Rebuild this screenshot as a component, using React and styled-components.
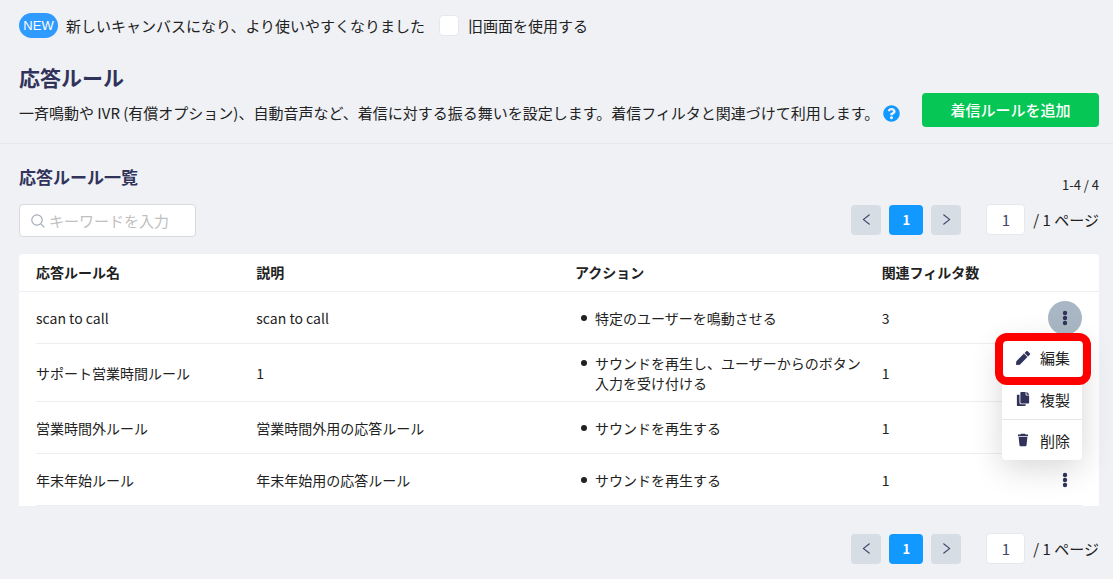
import { useState } from "react";
import styled, { createGlobalStyle } from "styled-components";
import { FaCopy, FaPen, FaQuestionCircle } from "react-icons/fa";
import { AiOutlineLeft, AiOutlineRight } from "react-icons/ai";

const GlobalStyle = createGlobalStyle`
  * {
    box-sizing: border-box;
  }
  body {
    margin: 0;
    background-color: #eff1f5;
    color: #222222;
    font-family: "Noto Sans CJK JP", sans-serif;
    font-size: 14px;
    line-height: 20px;
  }
  button, input {
    font-family: inherit;
  }
`;
const Notice = styled.div`
  display: flex;
  align-items: center;
  padding: 13px 14px 0 19px;
  font-size: 15px;
  line-height: 24px;
`;
const NewBadge = styled.span`
  width: 39px;
  height: 25px;
  margin-right: 8px;
  border-radius: 13px;
  background-color: #2f9bff;
  color: white;
  font-family: "Liberation Sans", sans-serif;
  font-size: 13px;
  line-height: 25px;
  text-align: center;
`;
const OldViewLabel = styled.label`
  display: flex;
  align-items: center;
  gap: 9px;
  margin-left: 14px;
`;
const CheckBox = styled.input`
  appearance: none;
  width: 20px;
  height: 21px;
  margin: 0;
  border: 1px solid #e6e8ee;
  border-radius: 4px;
  background-color: white;
  &:checked {
    background-color: #1199ff;
  }
`;
const PageHeader = styled.header`
  display: flex;
  justify-content: space-between;
  align-items: flex-end;
  padding: 23px 14px 16px 19px;
  border-bottom: 1px solid #e3e6eb;
`;
const PageTitle = styled.h1`
  margin: 0 0 6px;
  color: #31335a;
  font-size: 21px;
  font-weight: 700;
  line-height: 32px;
`;
const Description = styled.p`
  display: flex;
  align-items: center;
  gap: 4px;
  margin: 0;
  font-size: 15px;
  line-height: 28px;
`;
const HelpButton = styled.button`
  display: flex;
  padding: 0;
  border: none;
  background: none;
  color: #1199ff;
  font-size: 17px;
`;
const AddButton = styled.button`
  flex: none;
  width: 177px;
  height: 34px;
  padding: 0 0 2px;
  border: none;
  border-radius: 4px;
  background-color: #06c755;
  color: white;
  font-size: 15px;
  font-weight: 500;
`;
const Section = styled.main`
  padding: 19px 14px 15px 19px;
`;
const Toolbar = styled.div`
  display: flex;
  justify-content: space-between;
  align-items: flex-start;
  margin-bottom: 17px;
`;
const SectionTitle = styled.h2`
  margin: 0 0 13px;
  color: #31335a;
  font-size: 17px;
  font-weight: 700;
  line-height: 28px;
`;
const SearchBox = styled.label`
  display: flex;
  align-items: center;
  gap: 4px;
  width: 177px;
  height: 33px;
  padding: 0 11px;
  border: 1px solid #d9dadd;
  border-radius: 4px;
  background-color: white;
  color: #a3acba;
  svg {
    flex: none;
  }
`;
const SearchInput = styled.input`
  min-width: 0;
  flex: 1;
  padding: 0;
  border: none;
  outline: none;
  background: none;
  font-size: 15px;
  &::placeholder {
    color: #bfbfbf;
  }
`;
const ToolbarRight = styled.div`
  display: flex;
  flex-direction: column;
  gap: 9px;
  padding-top: 12px;
`;
const Count = styled.div`
  font-size: 13px;
  text-align: right;
`;
const PagerNav = styled.nav`
  display: flex;
  justify-content: flex-end;
  align-items: center;
  gap: 8px;
  height: 31px;
  font-size: 15px;
`;
const PageButton = styled.button`
  display: flex;
  justify-content: center;
  align-items: center;
  width: ${(props) => (props.$active ? "34px" : "30px")};
  height: 30px;
  padding: 0;
  border: none;
  border-radius: 4px;
  background-color: ${(props) => (props.$active ? "#1199ff" : "#d6dde5")};
  color: ${(props) => (props.$active ? "white" : "#43466a")};
  font-size: 13px;
  font-weight: 700;
`;
const PageInput = styled.input`
  width: 39px;
  height: 31px;
  margin-left: 17px;
  padding: 0;
  border: 1px solid #e6e8ee;
  border-radius: 4px;
  background-color: white;
  color: #43466a;
  font-size: 15px;
  text-align: center;
`;
const BottomPager = styled.div`
  margin-top: 27px;
`;
const RuleTable = styled.table`
  width: 100%;
  border-spacing: 0;
  border-radius: 4px 4px 0 0;
  background-color: white;
  table-layout: fixed;
`;
const HeadCell = styled.th`
  width: ${(props) => props.$width};
  padding: 8px 0 9px 17px;
  border-bottom: 1px solid #eceef1;
  font-weight: 700;
  text-align: left;
`;
const Row = styled.tr`
  background: linear-gradient(#eceef1, #eceef1) center bottom / calc(100% - 34px) 1px no-repeat;
`;
const Cell = styled.td`
  padding: 9px 17px;
`;
const ActionCell = styled(Cell)`
  padding-right: 0;
`;
const ActionList = styled.ul`
  margin: 0;
  padding-left: 6px;
  list-style: none;
`;
const ActionItem = styled.li`
  display: flex;
  gap: 8px;
  &::before {
    content: "";
    flex: none;
    width: 6px;
    height: 6px;
    margin-top: 7px;
    border-radius: 50%;
    background-color: #222222;
  }
`;
const MenuArea = styled.div`
  position: relative;
  display: flex;
  justify-content: flex-end;
`;
const KebabButton = styled.button`
  display: flex;
  justify-content: center;
  align-items: center;
  width: 34px;
  height: 34px;
  padding: 0;
  border: none;
  border-radius: 50%;
  background-color: ${(props) => (props.$open ? "#a9b7c4" : "transparent")};
  color: #31335a;
`;
const Menu = styled.div`
  position: absolute;
  top: 36px;
  right: 0;
  z-index: 10;
  width: 80px;
  border-radius: 4px;
  background-color: white;
  box-shadow: 0 8px 32px rgba(0, 0, 0, 0.16);
`;
const MenuItem = styled.button`
  display: flex;
  align-items: center;
  gap: 10px;
  width: 100%;
  height: 41px;
  padding: 0 12px 0 14px;
  border: none;
  border-top: ${(props) => (props.$first ? "none" : "1px solid #e3e5e9")};
  background: none;
  color: #222222;
  font-size: 15px;
  white-space: nowrap;
  svg {
    flex: none;
    color: #31335a;
  }
`;
const FocusRing = styled.div`
  position: absolute;
  top: -4px;
  left: -7px;
  right: -9px;
  height: 52px;
  border: 8px solid #ff0000;
  border-radius: 12px;
  pointer-events: none;
`;

const rules = [
  { name: "scan to call", desc: "scan to call", action: "特定のユーザーを鳴動させる", filters: 3 },
  { name: "サポート営業時間ルール", desc: "1", action: "サウンドを再生し、ユーザーからのボタン入力を受け付ける", filters: 1 },
  { name: "営業時間外ルール", desc: "営業時間外用の応答ルール", action: "サウンドを再生する", filters: 1 },
  { name: "年末年始ルール", desc: "年末年始用の応答ルール", action: "サウンドを再生する", filters: 1 },
];

function SearchIcon() {
  return (
    <svg width="14" height="14" viewBox="0 0 14 14" fill="none" stroke="currentColor" strokeWidth="1.2">
      <circle cx="6" cy="6" r="5.2" />
      <path d="M9.8 9.8L13.4 13.4" />
    </svg>
  );
}

function KebabIcon() {
  return (
    <svg width="6" height="16" viewBox="0 0 6 16" fill="currentColor">
      <circle cx="3" cy="3" r="2.2" />
      <circle cx="3" cy="8" r="2.2" />
      <circle cx="3" cy="13" r="2.2" />
    </svg>
  );
}

function TrashIcon() {
  return (
    <svg width="14" height="14" viewBox="0 0 14 14" fill="currentColor">
      <path d="M5 0.8H9L9.6 1.5H12V3.2H2V1.5H4.4Z" />
      <path d="M2.6 4H11.4L10.5 12.2Q10.4 13.2 9.4 13.2H4.6Q3.6 13.2 3.5 12.2Z" />
    </svg>
  );
}

function Pager() {
  return (
    <PagerNav>
      <PageButton aria-label="前へ"><AiOutlineLeft size={15} /></PageButton>
      <PageButton $active>1</PageButton>
      <PageButton aria-label="次へ"><AiOutlineRight size={15} /></PageButton>
      <PageInput aria-label="ページ" defaultValue="1" />
      <span>/ 1 ページ</span>
    </PagerNav>
  );
}

export default function App() {
  const [openRow, setOpenRow] = useState(0);
  const [keyword, setKeyword] = useState("");

  return (
    <>
      <GlobalStyle />
      <Notice>
        <NewBadge>NEW</NewBadge>
        <span>新しいキャンバスになり、より使いやすくなりました</span>
        <OldViewLabel>
          <CheckBox type="checkbox" />
          旧画面を使用する
        </OldViewLabel>
      </Notice>
      <PageHeader>
        <div>
          <PageTitle>応答ルール</PageTitle>
          <Description>
            一斉鳴動や IVR (有償オプション)、自動音声など、着信に対する振る舞いを設定します。着信フィルタと関連づけて利用します。
            <HelpButton aria-label="ヘルプ"><FaQuestionCircle /></HelpButton>
          </Description>
        </div>
        <AddButton>着信ルールを追加</AddButton>
      </PageHeader>
      <Section>
        <Toolbar>
          <div>
            <SectionTitle>応答ルール一覧</SectionTitle>
            <SearchBox>
              <SearchIcon />
              <SearchInput
                aria-label="キーワード"
                placeholder="キーワードを入力"
                value={keyword}
                onChange={(e) => setKeyword(e.target.value)}
              />
            </SearchBox>
          </div>
          <ToolbarRight>
            <Count>1-4 / 4</Count>
            <Pager />
          </ToolbarRight>
        </Toolbar>
        <RuleTable>
          <thead>
            <tr>
              <HeadCell $width="20.4%">応答ルール名</HeadCell>
              <HeadCell $width="29.5%">説明</HeadCell>
              <HeadCell $width="28.4%">アクション</HeadCell>
              <HeadCell $width="13%">関連フィルタ数</HeadCell>
              <HeadCell />
            </tr>
          </thead>
          <tbody>
            {rules.filter((el) => el.name.includes(keyword)).map((el, i) => (
              <Row key={el.name}>
                <Cell>{el.name}</Cell>
                <Cell>{el.desc}</Cell>
                <ActionCell>
                  <ActionList>
                    <ActionItem>{el.action}</ActionItem>
                  </ActionList>
                </ActionCell>
                <Cell>{el.filters}</Cell>
                <Cell>
                  <MenuArea>
                    <KebabButton
                      aria-label="メニュー"
                      $open={openRow === i}
                      onClick={() => setOpenRow(openRow === i ? null : i)}
                    >
                      <KebabIcon />
                    </KebabButton>
                    {openRow === i && (
                      <Menu>
                        <MenuItem $first><FaPen size={14} />編集</MenuItem>
                        <MenuItem><FaCopy size={14} />複製</MenuItem>
                        <MenuItem><TrashIcon />削除</MenuItem>
                        <FocusRing />
                      </Menu>
                    )}
                  </MenuArea>
                </Cell>
              </Row>
            ))}
          </tbody>
        </RuleTable>
        <BottomPager>
          <Pager />
        </BottomPager>
      </Section>
    </>
  );
}
